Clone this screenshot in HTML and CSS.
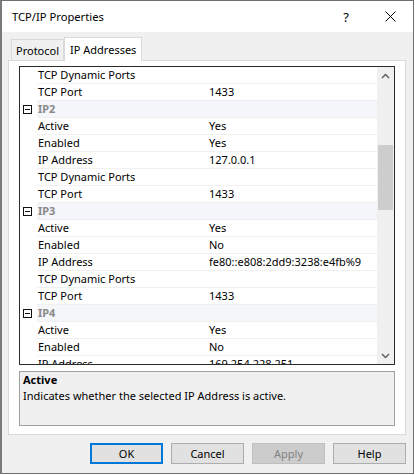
FILE: index.html
```html
<!DOCTYPE html>
<html>
<head>
<meta charset="utf-8">
<link rel="stylesheet" href="styles.css">
</head>
<body>
<div class="window">
  <div class="titlebar">
    <span class="title">TCP/IP Properties</span>
    <span class="capbtn help">?</span>
    <span class="capbtn close">
      <svg width="11" height="11" viewBox="0 0 11 11"><path d="M0.5 0.5 L10.5 10.5 M10.5 0.5 L0.5 10.5" stroke="#000" stroke-width="1" fill="none"/></svg>
    </span>
  </div>
  <div class="main">
    <div class="tabs">
      <div class="tab">Protocol</div>
      <div class="tab active">IP Addresses</div>
    </div>
    <div class="panel">
      <div class="grid">
        <div class="rows">
          <div class="row"><span class="mg"></span><span class="lbl">TCP Dynamic Ports</span><span class="val"></span></div>
          <div class="row"><span class="mg"></span><span class="lbl">TCP Port</span><span class="val">1433</span></div>
          <div class="row cat"><span class="mg"><i class="minus"></i></span><span class="lbl">IP2</span><span class="val"></span></div>
          <div class="row"><span class="mg"></span><span class="lbl">Active</span><span class="val">Yes</span></div>
          <div class="row"><span class="mg"></span><span class="lbl">Enabled</span><span class="val">Yes</span></div>
          <div class="row"><span class="mg"></span><span class="lbl">IP Address</span><span class="val">127.0.0.1</span></div>
          <div class="row"><span class="mg"></span><span class="lbl">TCP Dynamic Ports</span><span class="val"></span></div>
          <div class="row"><span class="mg"></span><span class="lbl">TCP Port</span><span class="val">1433</span></div>
          <div class="row cat"><span class="mg"><i class="minus"></i></span><span class="lbl">IP3</span><span class="val"></span></div>
          <div class="row"><span class="mg"></span><span class="lbl">Active</span><span class="val">Yes</span></div>
          <div class="row"><span class="mg"></span><span class="lbl">Enabled</span><span class="val">No</span></div>
          <div class="row"><span class="mg"></span><span class="lbl">IP Address</span><span class="val">fe80::e808:2dd9:3238:e4fb%9</span></div>
          <div class="row"><span class="mg"></span><span class="lbl">TCP Dynamic Ports</span><span class="val"></span></div>
          <div class="row"><span class="mg"></span><span class="lbl">TCP Port</span><span class="val">1433</span></div>
          <div class="row cat"><span class="mg"><i class="minus"></i></span><span class="lbl">IP4</span><span class="val"></span></div>
          <div class="row"><span class="mg"></span><span class="lbl">Active</span><span class="val">Yes</span></div>
          <div class="row"><span class="mg"></span><span class="lbl">Enabled</span><span class="val">No</span></div>
          <div class="row"><span class="mg"></span><span class="lbl">IP Address</span><span class="val">169.254.228.251</span></div>
        </div>
        <div class="scrollbar">
          <div class="sbtn">
            <svg width="9" height="6" viewBox="0 0 9 6"><path d="M1 5 L4.5 1.5 L8 5" stroke="#606060" stroke-width="1.5" fill="none"/></svg>
          </div>
          <div class="track"><div class="thumb"></div></div>
          <div class="sbtn">
            <svg width="9" height="6" viewBox="0 0 9 6"><path d="M1 1 L4.5 4.5 L8 1" stroke="#606060" stroke-width="1.5" fill="none"/></svg>
          </div>
        </div>
      </div>
      <div class="desc">
        <div class="desc-title">Active</div>
        <div class="desc-text">Indicates whether the selected IP Address is active.</div>
      </div>
    </div>
    <div class="buttons">
      <button class="btn default">OK</button>
      <button class="btn">Cancel</button>
      <button class="btn disabled">Apply</button>
      <button class="btn">Help</button>
    </div>
  </div>
</div>
</body>
</html>
```
FILE: styles.css
```css
* { box-sizing: border-box; }
html, body { margin: 0; padding: 0; background: #ffffff; }
body {
  font-family: "Noto Sans", "DejaVu Sans", sans-serif;
  font-size: 11px;
  color: #000;
}
.window {
  width: 414px;
  height: 474px;
  border: 1px solid #6f6f6f;
  border-left: 2px solid #7a7a7a;
  background: #f0f0f0;
  display: flex;
  flex-direction: column;
}
.titlebar {
  height: 31px;
  background: #fff;
  display: flex;
  align-items: center;
  padding-left: 10px;
}
.title { flex: 1; font-size: 11.2px; }
.capbtn {
  width: 46px;
  height: 31px;
  display: flex;
  align-items: center;
  justify-content: center;
}
.help { font-size: 13px; padding-left: 4px; }
.main {
  flex: 1;
  padding: 0 7px 0 6px;
  display: flex;
  flex-direction: column;
}
.tabs {
  height: 28px;
  display: flex;
  align-items: flex-end;
  padding-left: 3px;
}
.tab {
  height: 21px;
  padding: 0 4px;
  border: 1px solid #d9d9d9;
  border-bottom: none;
  background: #f0f0f0;
  display: flex;
  align-items: center;
}
.tab.active {
  height: 24px;
  margin-bottom: -1px;
  padding: 0 5px;
  background: #fff;
  position: relative;
  z-index: 1;
}
.panel {
  height: 375px;
  border: 1px solid #d9d9d9;
  background: #fff;
  padding: 5px 10px 8px 10px;
  display: flex;
  flex-direction: column;
}
.grid {
  height: 299px;
  border: 1px solid #2a2a2a;
  display: flex;
  background: #fff;
}
.rows {
  flex: 1;
  overflow: hidden;
}
.row {
  height: 17px;
  display: flex;
  align-items: stretch;
}
.row .mg {
  width: 17px;
  flex: none;
  display: flex;
  align-items: center;
  padding-left: 3px;
}
.row .lbl {
  width: 168px;
  flex: none;
  padding-left: 1px;
  line-height: 16px;
  border-bottom: 1px solid #f0f0f0;
  white-space: nowrap;
}
.row .val {
  flex: 1;
  padding-left: 4px;
  line-height: 16px;
  border-bottom: 1px solid #f0f0f0;
  white-space: nowrap;
}
.row.cat .lbl, .row.cat .val {
  background: #f4f6f9;
}
.row.cat .lbl {
  color: #8a8a8a;
  font-weight: 700;
}
.minus {
  display: block;
  width: 9px;
  height: 9px;
  border: 1px solid #111;
  position: relative;
  background: #fff;
}
.minus::after {
  content: "";
  position: absolute;
  left: 1px;
  top: 3px;
  width: 5px;
  height: 1px;
  background: #111;
}
.scrollbar {
  width: 17px;
  flex: none;
  background: #f0f0f0;
  display: flex;
  flex-direction: column;
}
.sbtn {
  height: 17px;
  display: flex;
  align-items: center;
  justify-content: center;
}
.track {
  flex: 1;
  padding: 61px 1px 0 1px;
}
.thumb {
  height: 65px;
  background: #cdcdcd;
}
.desc {
  margin-top: 6px;
  height: 55px;
  border: 1px solid #a0a0a0;
  background: #f0f0f0;
  padding: 0 3px;
  line-height: 16px;
}
.desc-title { font-weight: 700; }
.buttons {
  margin-top: 8px;
  display: flex;
  justify-content: flex-end;
  gap: 8px;
}
.btn {
  width: 73px;
  height: 21px;
  font-family: inherit;
  font-size: 11px;
  background: #e1e1e1;
  border: 1px solid #adadad;
  color: #000;
  padding: 0;
  margin: 0;
}
.btn.default { border: 2px solid #0078d7; }
.btn.disabled { background: #cccccc; border-color: #bfbfbf; color: #838383; }
```
